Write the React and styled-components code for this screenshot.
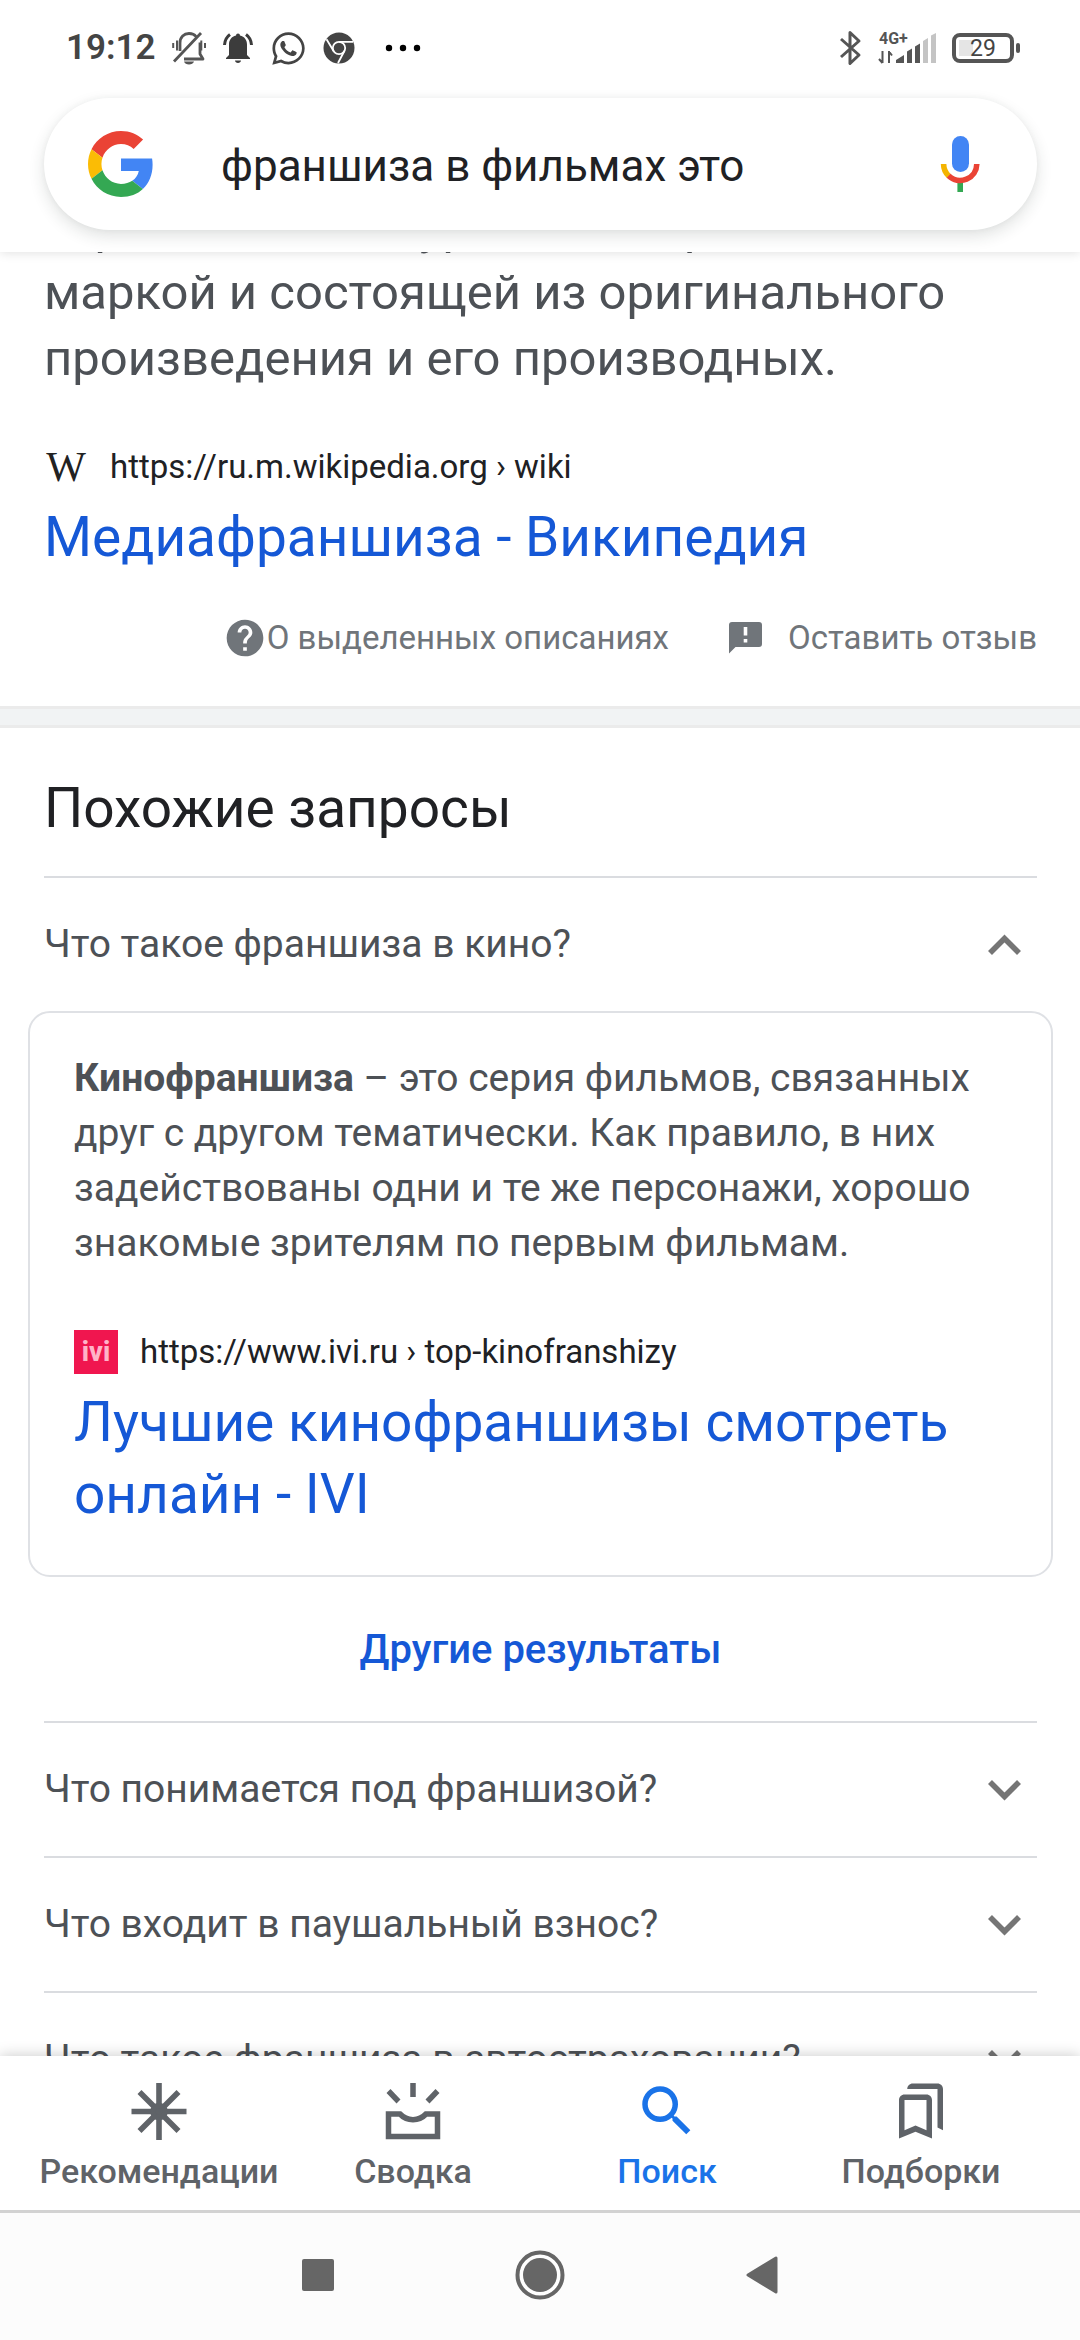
import React, { useState } from "react";
import styled, { createGlobalStyle } from "styled-components";
import { FaWhatsapp } from "react-icons/fa";
import { MdHelp, MdSearch } from "react-icons/md";

const GlobalStyle = createGlobalStyle`
  * {
    box-sizing: border-box;
  }
  body {
    margin: 0;
    background-color: #fff;
    font-family: Roboto, "Noto Sans", sans-serif;
    color: #202124;
  }
  button, input {
    font-family: inherit;
  }
  button {
    border: none;
    background: none;
    padding: 0;
    cursor: pointer;
  }
  a {
    text-decoration: none;
  }
  svg {
    display: block;
    flex-shrink: 0;
    overflow: visible;
  }
`;

const Page = styled.div`
  height: 100vh;
  display: flex;
  flex-direction: column;
`;

const Header = styled.header`
  position: relative;
  z-index: 2;
  background-color: #fff;
  padding-bottom: 22px;
  box-shadow: 0 1px 10px rgba(0, 0, 0, 0.12);
`;

const StatusBar = styled.div`
  height: 98px;
  padding: 0 60px 2px 66px;
  display: flex;
  align-items: center;
  justify-content: space-between;
  color: #444;
`;

const StatusGroup = styled.div`
  display: flex;
  align-items: center;
  gap: 16px;
`;

const Clock = styled.time`
  font-size: 35px;
  line-height: 40px;
  font-weight: 600;
`;

const Battery = styled.div`
  display: flex;
  align-items: center;
  gap: 2px;

  &::after {
    content: "";
    width: 4px;
    height: 10px;
    border-radius: 2px;
    background-color: #555;
  }
`;

const BatteryBody = styled.div`
  width: 62px;
  height: 30px;
  border: 4px solid #555;
  border-radius: 8px;
  background: linear-gradient(#e5e5e5, #e5e5e5) 3px center / 14px 16px no-repeat;
  font-size: 23px;
  line-height: 24px;
  text-align: center;
`;

const SearchForm = styled.form`
  height: 132px;
  margin: 0 43px 0 44px;
  padding: 0 44px;
  display: flex;
  align-items: center;
  border-radius: 66px;
  background-color: #fff;
  box-shadow: 0 6px 16px rgba(32, 50, 45, 0.14), 0 0 6px rgba(0, 0, 0, 0.04);
`;

const SearchInput = styled.input`
  flex: 1;
  min-width: 0;
  height: 66px;
  margin: 0 32px 0 67px;
  padding: 3px 0 0;
  border: none;
  outline: none;
  background: none;
  color: #202124;
  font-size: 44px;
`;

const Main = styled.main`
  flex: 1;
  min-height: 0;
  overflow: hidden;
`;

const Section = styled.section`
  padding: 0 43px 0 44px;
`;

// the answer is scrolled partly under the header
const Snippet = styled.p`
  margin: -58px 0 53px;
  color: #4d5156;
  font-size: 49px;
  line-height: 66px;
`;

const Source = styled.div`
  display: flex;
  align-items: center;
  gap: 22px;
  height: 44px;
  font-size: 33px;
  line-height: 44px;
  white-space: nowrap;
`;

const Favicon = styled.span`
  width: 44px;
  height: 44px;
  display: flex;
  align-items: center;
  justify-content: center;
  line-height: 44px;
  background-color: ${(props) => props.$bg || "transparent"};
  color: ${(props) => props.$color};
  font-family: ${(props) => props.$font};
  font-size: ${(props) => props.$size}px;
  font-weight: ${(props) => props.$weight};
`;

const ResultTitle = styled.h3`
  margin: 12px 0 0;
  font-size: 55px;
  font-weight: 400;
  line-height: 72px;

  a {
    color: #1558d6;
  }
`;

const FeedbackRow = styled.div`
  display: flex;
  justify-content: flex-end;
  gap: 60px;
  padding: 43px 0 46px;
`;

const FeedbackLink = styled.a`
  display: flex;
  align-items: center;
  gap: ${(props) => props.$gap}px;
  color: #70757a;
  font-size: 33px;
  line-height: 44px;
  white-space: nowrap;
`;

const Separator = styled.div`
  height: 22px;
  background-color: #f1f3f4;
  border-top: 3px solid #ebebeb;
  border-bottom: 3px solid #ebebeb;
`;

const SectionTitle = styled.h2`
  margin: 0;
  padding: 44px 0 32px;
  font-size: 55px;
  font-weight: 400;
  line-height: 72px;
`;

const Item = styled.div`
  border-top: 2px solid #dadce0;
`;

const Question = styled.button`
  width: 100%;
  height: 133px;
  padding-right: 16px;
  display: flex;
  align-items: center;
  justify-content: space-between;
  color: #4d5156;
  font-size: 39px;
  line-height: 55px;
  text-align: left;
`;

const Card = styled.article`
  margin: 0 -16px;
  padding: 38px 44px 45px;
  border: 2px solid #dfe1e5;
  border-radius: 22px;
`;

const Answer = styled.p`
  margin: 0 0 59px;
  color: #4d5156;
  font-size: 39px;
  line-height: 55px;
`;

const MoreLink = styled.a`
  height: 144px;
  display: flex;
  align-items: center;
  justify-content: center;
  color: #1558d6;
  font-size: 40px;
  font-weight: 500;
  line-height: 55px;
`;

const TabBar = styled.nav`
  position: relative;
  z-index: 2;
  height: 154px;
  padding: 0 32px;
  display: grid;
  grid-template-columns: repeat(4, 1fr);
  background-color: #fff;
  box-shadow: 0 0 14px rgba(0, 0, 0, 0.22);
`;

const Tab = styled.a`
  display: flex;
  flex-direction: column;
  align-items: center;
  padding-top: 22px;
  color: ${(props) => (props.$active ? "#1a73e8" : "#5f6368")};
  font-size: 34px;
  font-weight: 500;
  line-height: 44px;
  gap: 5px;
  white-space: nowrap;
`;

const SystemBar = styled.div`
  position: relative;
  z-index: 2;
  height: 130px;
  padding-bottom: 3px;
  display: flex;
  align-items: center;
  justify-content: center;
  gap: 156px;
  background-color: #fcfcfc;
  border-top: 3px solid #d2d2d2;
`;

const SystemButton = styled.button`
  width: 66px;
  height: 66px;
  display: flex;
  align-items: center;
  justify-content: center;
`;

const GoogleLogo = () => (
  <svg width="66" height="66" viewBox="0 0 48 48">
    <path fill="#EA4335" d="M24 9.5c3.54 0 6.71 1.22 9.21 3.6l6.85-6.85C35.9 2.38 30.47 0 24 0 14.62 0 6.51 5.38 2.56 13.22l7.98 6.19C12.43 13.72 17.74 9.5 24 9.5z" />
    <path fill="#4285F4" d="M46.98 24.55c0-1.57-.15-3.09-.38-4.55H24v9.02h12.94c-.58 2.96-2.26 5.48-4.78 7.18l7.73 6c4.51-4.18 7.09-10.36 7.09-17.65z" />
    <path fill="#FBBC05" d="M10.53 28.59c-.48-1.45-.76-2.99-.76-4.59s.27-3.14.76-4.59l-7.98-6.19C.92 16.46 0 20.12 0 24c0 3.88.92 7.54 2.56 10.78l7.97-6.19z" />
    <path fill="#34A853" d="M24 48c6.48 0 11.93-2.13 15.89-5.81l-7.73-6c-2.15 1.45-4.92 2.3-8.16 2.3-6.26 0-11.57-4.22-13.47-9.91l-7.98 6.19C6.51 42.62 14.62 48 24 48z" />
  </svg>
);

const MicIcon = () => (
  <svg width="66" height="66" viewBox="0 0 66 66">
    <rect x="25" y="5" width="17" height="36" rx="8.5" fill="#4285F4" />
    <path fill="none" stroke="#34A853" strokeWidth="5.6" d="M33.2 49v12" />
    <path fill="none" stroke="#F4B400" strokeWidth="5.6" d="M16.6 33a16.6 16.6 0 0 0 5.2 12" />
    <path fill="none" stroke="#EA4335" strokeWidth="5.6" d="M21.6 44.7A16.6 16.6 0 0 0 49.8 33" />
  </svg>
);

const MutedBellIcon = () => (
  <svg width="34" height="34" viewBox="0 0 34 34" fill="none" stroke="#555" strokeWidth="2.8">
    <path d="M8 20V12C8 6 12 2.5 17 2.5c3 0 5.5 1 7 3M28 11.5V23l3 5H12M2 30.5 29 2" strokeLinejoin="round" />
    <path d="M1.2 12v5M5 9.500v10M29.300 9.500v10M33 12v5" strokeWidth="2" />
    <path d="M12 30.500h10c-1 4-9 4-10 0z" fill="#555" stroke="none" />
  </svg>
);

const BellIcon = () => (
  <svg width="32" height="32" viewBox="0 0 32 32" fill="#3c3c3c">
    <path d="M14 3.500a2 2 0 0 1 4 0c4.500 1 7 4.500 7 9V23l3 3v1H4v-1l3-3V12.500c0-4.500 2.500-8 7-9zM13 28.500h6c0 3.300-6 3.300-6 0z" />
    <path fill="none" stroke="#3c3c3c" strokeWidth="3" d="M8 2.500C4.500 5 2.800 8.500 2.500 13M24 2.500c3.500 2.500 5.200 6 5.500 10.500" />
  </svg>
);

const ChromeIcon = () => (
  <svg width="32" height="32" viewBox="0 0 32 32">
    <circle cx="16" cy="16" r="15.500" fill="#444" />
    <g fill="none" stroke="#fff" strokeWidth="1.800">
      <circle cx="16" cy="16" r="6.200" />
      <path d="M16 9.800h14M10.600 19 3.500 7.200M21.400 19 15 31" />
    </g>
  </svg>
);

const BluetoothIcon = () => (
  <svg width="24" height="36" viewBox="0 0 24 36" fill="none" stroke="#555" strokeWidth="3" strokeLinejoin="round">
    <path d="M2 9l18 16-9 8.500V2.500L20 11 2 27" />
  </svg>
);

const SignalIcon = () => (
  <svg width="57" height="34" viewBox="0 0 57 34" fill="#555">
    <text x="0" y="13" fontSize="16" fontWeight="700" fontFamily="Roboto">4G+</text>
    <path d="M3.500 20v12M3.500 32 0 28M10 32V20M10 20.500l3 4" fill="none" stroke="#555" strokeWidth="2" />
    <path d="M17 32v-3l8-5v8zM28 32V20.500l5-3V32zM36 32V15.500l5-3V32z" />
    <path d="M44 32V10l5-3v25zM52 32V4.500L57 2v30z" fill="#c4c4c4" />
  </svg>
);

const FeedbackIcon = () => (
  <svg width="33" height="33" viewBox="0 0 33 33">
    <path fill="#70757a" d="M3 0h27a3 3 0 0 1 3 3v19a3 3 0 0 1-3 3H6.500L0 31.500V3a3 3 0 0 1 3-3z" />
    <path stroke="#fff" strokeWidth="3.600" d="M16.500 5v8.500M16.500 17v3.600" />
  </svg>
);

const Chevron = ({ open }) => (
  <svg width="33" height="22" viewBox="0 0 33 22" fill="none" stroke="#757575" strokeWidth="5.600">
    <path d={open ? "M2 19 16.500 4.500 31 19" : "M2 3l14.500 14.500L31 3"} />
  </svg>
);

const StarIcon = () => (
  <svg width="66" height="66" viewBox="0 0 66 66" fill="none" stroke="currentColor" strokeWidth="5.600">
    <path d="M33 5v57M5.500 33.500h55M13.500 14l39 39M52.500 14l-39 39" />
    <circle cx="33" cy="33.500" r="6" fill="currentColor" />
  </svg>
);

const DigestIcon = () => (
  <svg width="66" height="66" viewBox="0 0 66 66" fill="none" stroke="currentColor" strokeWidth="5.500">
    <path d="M33 5v14M8.500 13l10 10.500M57.500 13l-10 10.500" />
    <path d="M8.500 36H20c7 7.500 19 7.500 26 0h11.500v22.500h-49z" />
  </svg>
);

const BookmarksIcon = () => (
  <svg width="66" height="66" viewBox="0 0 24 24" fill="currentColor">
    <path d="M7 4c0-1.100.9-2 2-2h9c1.100 0 2 .9 2 2v15l-2-1V4z" />
    <path fillRule="evenodd" d="M6 6h8c1.100 0 2 .9 2 2v14l-6-2.500L4 22V8c0-1.100.9-2 2-2zm0 2v11l4-1.700 4 1.700V8z" />
  </svg>
);

const questions = [
  "Что такое франшиза в кино?",
  "Что понимается под франшизой?",
  "Что входит в паушальный взнос?",
  "Что такое франшиза в автостраховании?",
];

const tabs = [
  { label: "Рекомендации", icon: <StarIcon /> },
  { label: "Сводка", icon: <DigestIcon /> },
  { label: "Поиск", icon: <MdSearch size={66} />, active: true },
  { label: "Подборки", icon: <BookmarksIcon /> },
];

const App = () => {
  const [query, setQuery] = useState("франшиза в фильмах это");
  const [opened, setOpened] = useState(0);

  return (
    <Page>
      <GlobalStyle />
      <Header>
        <StatusBar>
          <StatusGroup>
            <Clock>19:12</Clock>
            <MutedBellIcon />
            <BellIcon />
            <FaWhatsapp size={37} />
            <ChromeIcon />
            <svg width="66" height="8" viewBox="0 0 66 8">
              <circle cx="18" cy="4" r="3.2" />
              <circle cx="32" cy="4" r="3.2" />
              <circle cx="46" cy="4" r="3.2" />
            </svg>
          </StatusGroup>
          <StatusGroup>
            <BluetoothIcon />
            <SignalIcon />
            <Battery>
              <BatteryBody>29</BatteryBody>
            </Battery>
          </StatusGroup>
        </StatusBar>
        <SearchForm onSubmit={(e) => e.preventDefault()}>
          <GoogleLogo />
          <SearchInput
            aria-label="Поиск"
            name="q"
            value={query}
            onChange={(e) => setQuery(e.target.value)}
            autoComplete="off"
          />
          <button type="button" aria-label="Голосовой поиск">
            <MicIcon />
          </button>
        </SearchForm>
      </Header>

      <Main>
        <Section>
          <Snippet>
            торговой сигнатурой и товарной
            <br />
            маркой и состоящей из оригинального произведения и его производных.
          </Snippet>
          <Source>
            <Favicon
              $color="#222"
              $font='"Liberation Serif", serif'
              $size={42}
              $weight={400}
            >
              W
            </Favicon>
            https://ru.m.wikipedia.org › wiki
          </Source>
          <ResultTitle>
            <a href="#wiki">Медиафраншиза - Википедия</a>
          </ResultTitle>
          <FeedbackRow>
            <FeedbackLink href="#about" $gap={0}>
              <MdHelp size={44} />
              О выделенных описаниях
            </FeedbackLink>
            <FeedbackLink href="#feedback" $gap={26}>
              <FeedbackIcon />
              Оставить отзыв
            </FeedbackLink>
          </FeedbackRow>
        </Section>
        <Separator />
        <Section>
          <SectionTitle>Похожие запросы</SectionTitle>
          {questions.map((question, index) => (
            <Item key={question}>
              <Question
                type="button"
                aria-expanded={opened === index}
                onClick={() => setOpened(opened === index ? null : index)}
              >
                {question}
                <Chevron open={opened === index} />
              </Question>
              {index === 0 && opened === 0 && (
                <>
                  <Card>
                    <Answer>
                      <b>Кинофраншиза</b> – это серия фильмов, связанных друг с
                      другом тематически. Как правило, в них задействованы одни
                      и те же персонажи, хорошо знакомые зрителям по первым
                      фильмам.
                    </Answer>
                    <Source>
                      <Favicon
                        $bg="#f0164f"
                        $color="#ffb3c8"
                        $font="Roboto, sans-serif"
                        $size={27}
                        $weight={800}
                      >
                        ivi
                      </Favicon>
                      https://www.ivi.ru › top-kinofranshizy
                    </Source>
                    <ResultTitle>
                      <a href="#ivi">Лучшие кинофраншизы смотреть онлайн - IVI</a>
                    </ResultTitle>
                  </Card>
                  <MoreLink href="#more">Другие результаты</MoreLink>
                </>
              )}
            </Item>
          ))}
        </Section>
      </Main>

      <TabBar>
        {tabs.map((tab) => (
          <Tab key={tab.label} href="#" $active={tab.active}>
            {tab.icon}
            {tab.label}
          </Tab>
        ))}
      </TabBar>
      <SystemBar>
        <SystemButton aria-label="Недавние">
          <svg width="32" height="32" viewBox="0 0 32 32">
            <rect width="32" height="32" rx="2" fill="#666" />
          </svg>
        </SystemButton>
        <SystemButton aria-label="Домой">
          <svg width="50" height="50" viewBox="0 0 50 50">
            <circle cx="25" cy="25" r="22.500" fill="#fff" stroke="#666" strokeWidth="4" />
            <circle cx="25" cy="25" r="17" fill="#666" />
          </svg>
        </SystemButton>
        <SystemButton aria-label="Назад">
          <svg width="34" height="38" viewBox="0 0 34 38">
            <path fill="#666" stroke="#666" strokeWidth="3" strokeLinejoin="round" d="M3 19 31 2v34z" />
          </svg>
        </SystemButton>
      </SystemBar>
    </Page>
  );
};

export default App;
